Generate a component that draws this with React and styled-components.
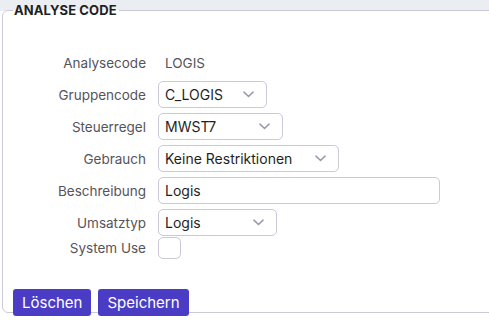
import React from "react";
import styled, { createGlobalStyle } from "styled-components";

const GlobalStyle = createGlobalStyle`
  html, body {
    margin: 0;
    padding: 0;
    overflow: hidden;
    background: #fff;
  }
  body {
    font-family: Inter, "Noto Sans", sans-serif;
    color: #222;
  }
`;

const Frame = styled.div`
  padding-left: 2px;
  background: linear-gradient(to bottom, #eaedf2 11px, #fff 11px);
  height: 326px;
  box-sizing: border-box;
`;

const Fieldset = styled.fieldset`
  margin: 0 -20px 0 0;
  padding: 0 10px 8px 10px;
  border: 1px solid #cbc8d8;
  border-radius: 6px;
  background: #fff;
  height: 313px;
  box-sizing: border-box;
`;

const Legend = styled.legend`
  padding: 0 2px 0 1px;
  margin-left: 0;
  font-size: 13px;
  font-weight: 700;
  line-height: 20px;
  color: #1f1f24;
  letter-spacing: 0.1px;
`;

const Form = styled.div`
  display: flex;
  flex-direction: column;
  gap: 5px;
  margin-top: 29px;
`;

const Row = styled.div`
  display: grid;
  grid-template-columns: 133px auto;
  column-gap: 12px;
  align-items: center;
  min-height: ${(p) => (p.$tight ? "0" : "27px")};
  margin-top: ${(p) => (p.$tight ? "-4px" : "0")};
`;

const Label = styled.span`
  text-align: right;
  font-size: 13.5px;
  color: #55545c;
`;

const Value = styled.span`
  padding-left: 7px;
  font-size: 13.5px;
  color: #55545c;
`;

const SelectBox = styled.div`
  width: ${(p) => p.$w}px;
  height: 27px;
  box-sizing: border-box;
  border: 1px solid #cbc8d8;
  border-radius: 5px;
  display: flex;
  align-items: center;
  justify-content: space-between;
  padding: 0 12px 0 6px;
  font-size: 14px;
  color: #1f1f24;
  background: #fff;
`;

const TextBox = styled(SelectBox)``;

const Chevron = () => (
  <svg width="11" height="7" viewBox="0 0 11 7" fill="none">
    <path d="M1 1.2l4.5 4.3L10 1.2" stroke="#9d9ab0" strokeWidth="1.6" strokeLinecap="round" strokeLinejoin="round" />
  </svg>
);

const Checkbox = styled.div`
  width: 23px;
  height: 22px;
  box-sizing: border-box;
  border: 1px solid #cbc8d8;
  border-radius: 5px;
  background: #fff;
`;

const Actions = styled.div`
  display: flex;
  gap: 7px;
  margin-top: 30px;
`;

const Button = styled.button`
  height: 27px;
  padding: 0 9px;
  border: none;
  border-radius: 3px;
  background: #4b3cc6;
  color: #fff;
  font-family: Inter, "Noto Sans", sans-serif;
  font-size: 15px;
  cursor: pointer;
`;

const Select = ({ w, children }) => (
  <SelectBox $w={w}>
    <span>{children}</span>
    <Chevron />
  </SelectBox>
);

const App = () => {
  return (
    <Frame>
      <GlobalStyle />
      <Fieldset>
        <Legend>ANALYSE CODE</Legend>
        <Form>
          <Row>
            <Label>Analysecode</Label>
            <Value>LOGIS</Value>
          </Row>
          <Row>
            <Label>Gruppencode</Label>
            <Select w={109}>C_LOGIS</Select>
          </Row>
          <Row>
            <Label>Steuerregel</Label>
            <Select w={125}>MWST7</Select>
          </Row>
          <Row>
            <Label>Gebrauch</Label>
            <Select w={181}>Keine Restriktionen</Select>
          </Row>
          <Row>
            <Label>Beschreibung</Label>
            <TextBox $w={282}>Logis</TextBox>
          </Row>
          <Row>
            <Label>Umsatztyp</Label>
            <Select w={119}>Logis</Select>
          </Row>
          <Row $tight>
            <Label>System Use</Label>
            <Checkbox />
          </Row>
        </Form>
        <Actions>
          <Button>Löschen</Button>
          <Button>Speichern</Button>
        </Actions>
      </Fieldset>
    </Frame>
  );
};

export default App;
